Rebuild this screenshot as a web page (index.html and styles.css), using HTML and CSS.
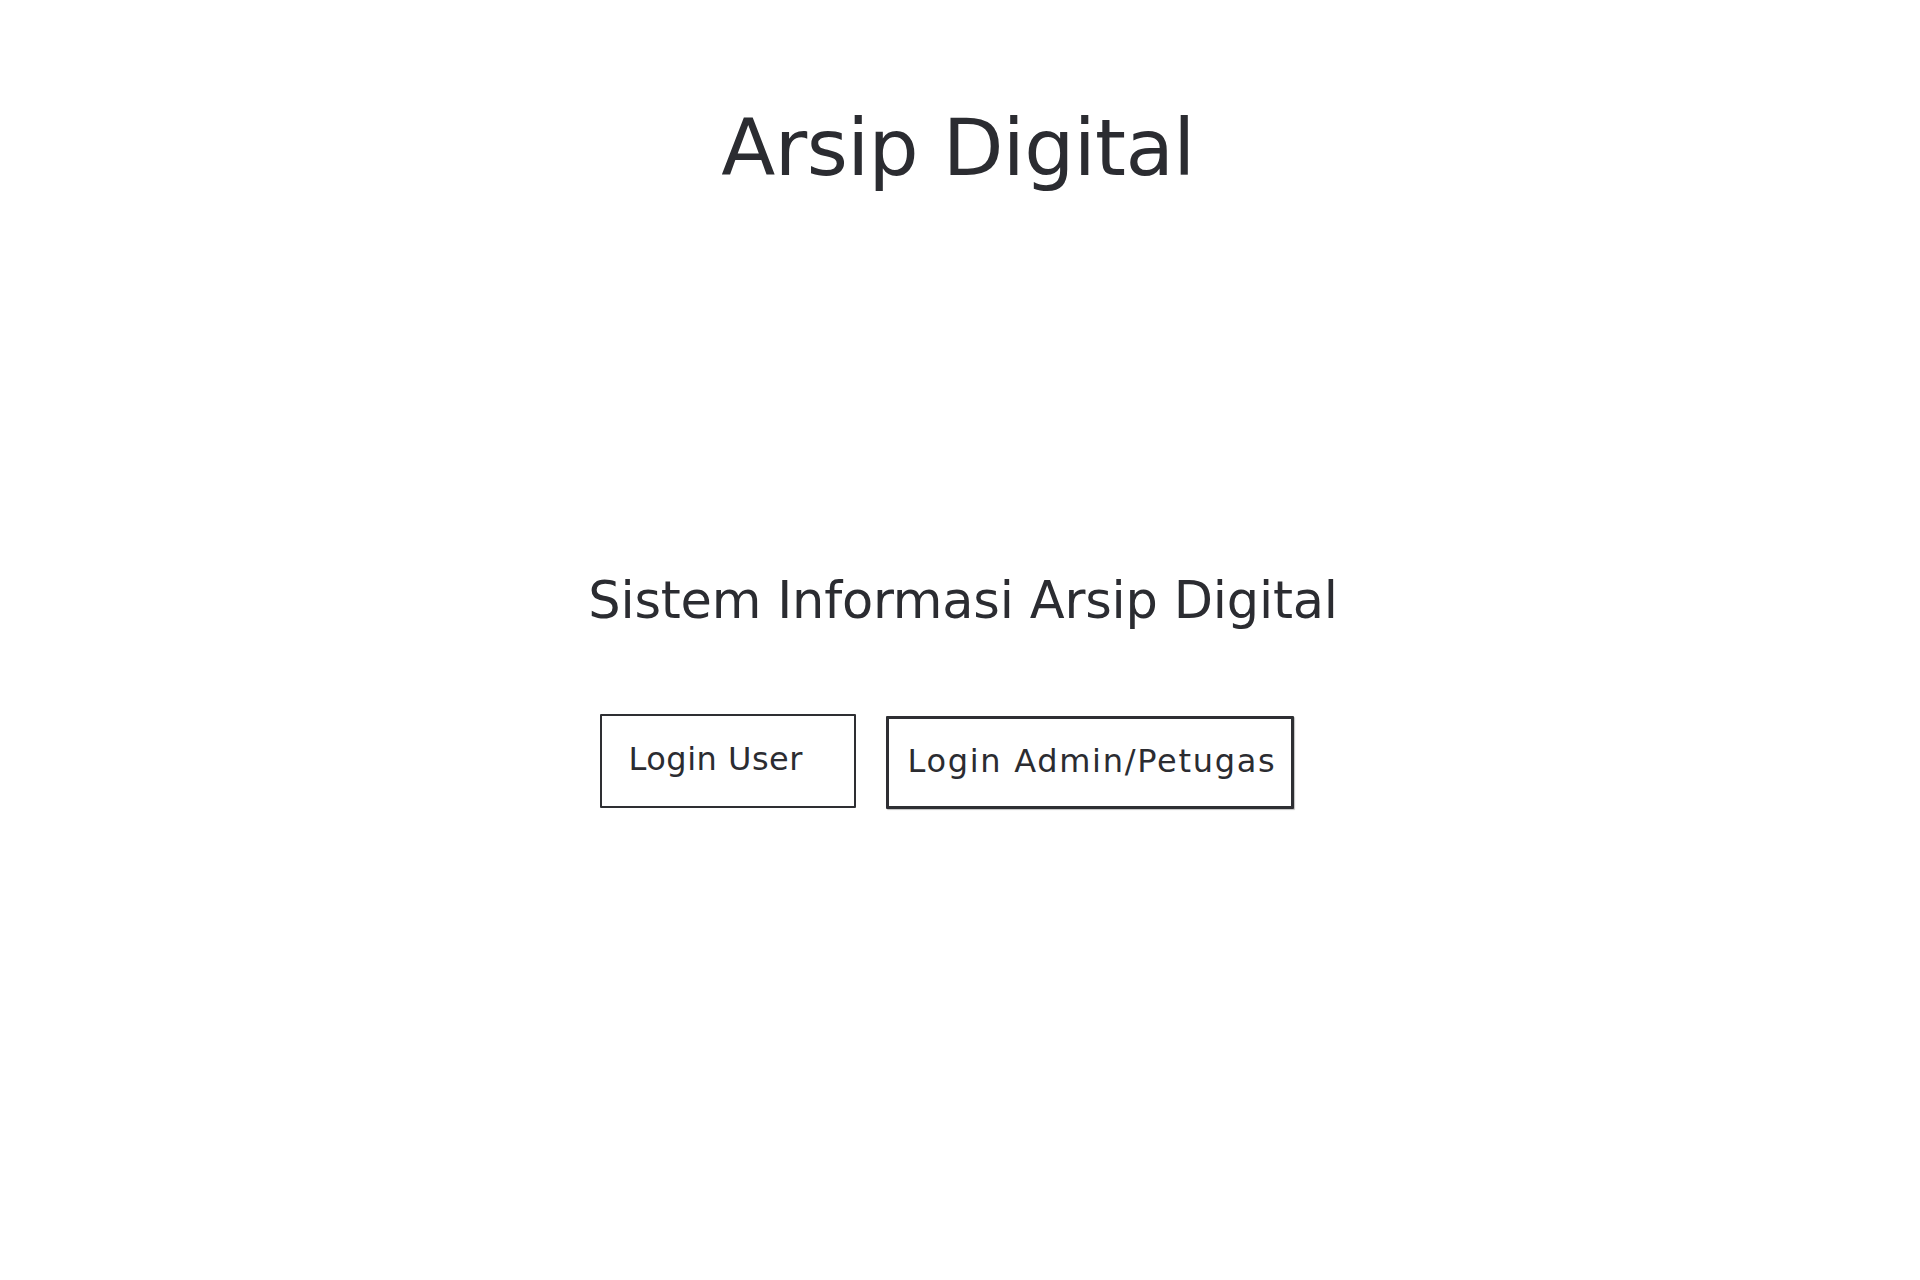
FILE: index.html
```html
<!DOCTYPE html>
<html lang="id">
<head>
<meta charset="utf-8">
<title>Arsip Digital</title>
<link rel="stylesheet" href="styles.css">
</head>
<body>
<main class="page">
  <h1 class="title">Arsip Digital</h1>
  <h2 class="subtitle">Sistem Informasi Arsip Digital</h2>
  <div class="actions">
    <button class="btn btn-user" type="button">Login User</button>
    <button class="btn btn-admin" type="button">Login Admin/Petugas</button>
  </div>
</main>
</body>
</html>
```
FILE: styles.css
```css
html, body {
  margin: 0;
  padding: 0;
  background: #ffffff;
}

body {
  font-family: "DejaVu Sans", "Liberation Sans", sans-serif;
  color: #2b2c31;
  width: 1920px;
  height: 1280px;
}

.page {
  display: flex;
  flex-direction: column;
  align-items: center;
  padding-top: 109px;
}

.title {
  margin: 0 4px 0 0;
  font-size: 79px;
  line-height: 79px;
  font-weight: normal;
  letter-spacing: -0.6px;
}

.subtitle {
  margin: 387px 0 0 6px;
  font-size: 51px;
  line-height: 51px;
  font-weight: normal;
  letter-spacing: -0.2px;
}

.actions {
  display: flex;
  align-items: flex-start;
  gap: 30px;
  margin: 88px 27px 0 0;
}

.btn {
  box-sizing: border-box;
  background: #ffffff;
  color: #2b2c31;
  font-family: "DejaVu Sans", "Liberation Sans", sans-serif;
  font-size: 32px;
  line-height: 32px;
  text-align: left;
  border-style: solid;
  border-color: #2e2f33;
  border-radius: 1px;
  cursor: pointer;
}

.btn-user {
  width: 256px;
  height: 94px;
  border-width: 2px;
  padding: 27px 0 31px 27px;
  letter-spacing: 0.5px;
}

.btn-admin {
  width: 408px;
  height: 93px;
  margin-top: 2px;
  border-width: 3px;
  padding: 26px 0 29px 19px;
  letter-spacing: 1.7px;
  box-shadow: 1px 1px 1px rgba(0, 0, 0, 0.25);
}
```
